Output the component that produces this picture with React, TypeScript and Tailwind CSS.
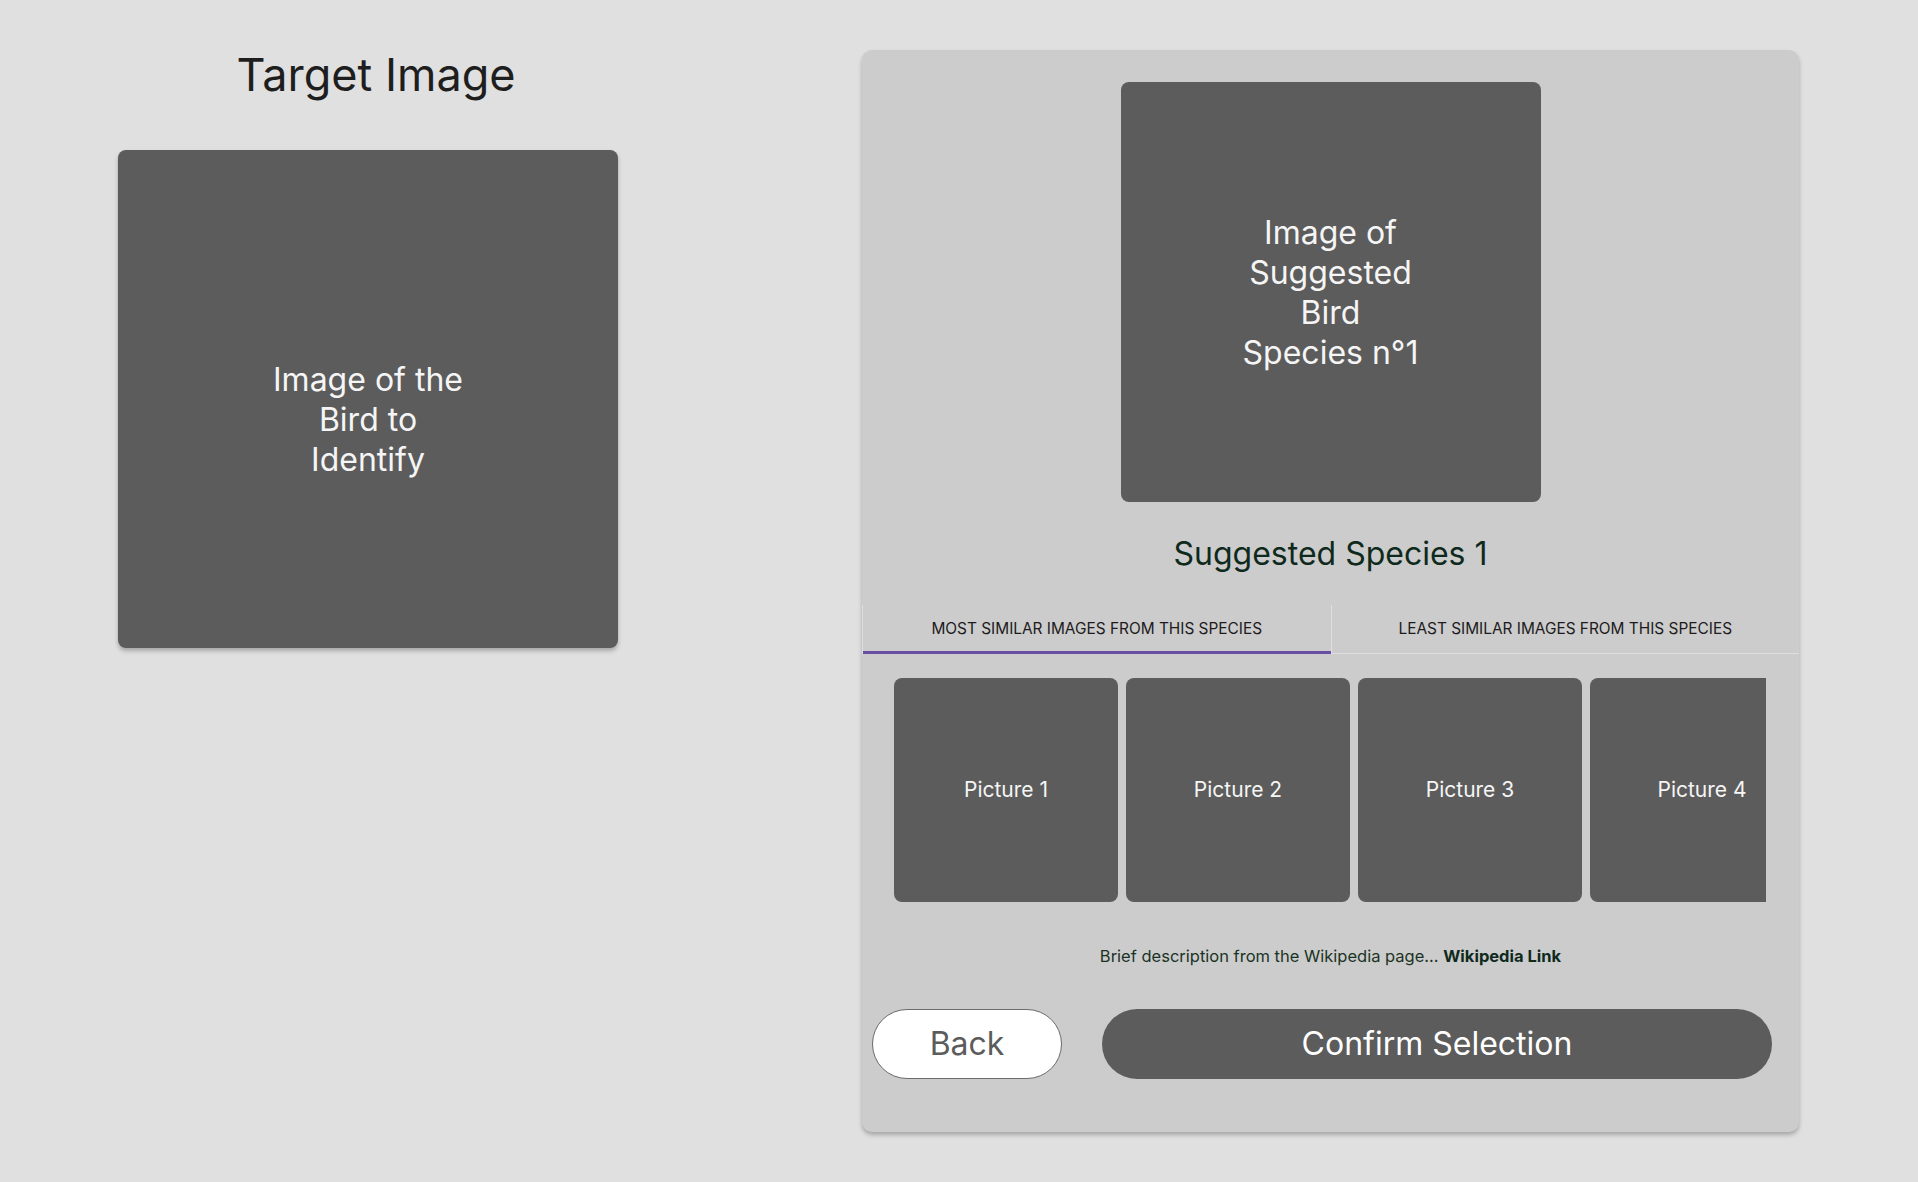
import { useState } from "react";

const pictures = ["Picture 1", "Picture 2", "Picture 3", "Picture 4"];

function App() {
  const [tab, setTab] = useState(0);

  return (
    <div className="min-h-screen bg-[#e0e0e0] font-['Inter',sans-serif]">
      <div className="flex items-start gap-[244px] pl-[118px] pt-[50px]">
        {/* Target image */}
        <div className="flex w-[500px] flex-col">
          <h1 className="-mt-[3px] pl-[16px] text-center text-[45px] leading-[56px] text-[#1e1e1e]">Target Image</h1>
          <div className="mt-[47px] flex h-[498px] w-[500px] items-center justify-center rounded-[8px] bg-[#5c5c5c] pt-[42px] shadow-[0_3px_4px_rgba(0,0,0,0.25)]">
            <p className="text-center text-[32px] leading-[40px] text-[#f5f5f5]">
              Image of the
              <br />
              Bird to
              <br />
              Identify
            </p>
          </div>
        </div>

        {/* Suggestion panel */}
        <div className="flex w-[937px] flex-col items-center rounded-[10px] bg-[#cccccc] pt-[32px] pb-[53px] shadow-[0_3px_4px_rgba(0,0,0,0.25)]">
          <div className="flex h-[420px] w-[420px] items-center justify-center rounded-[8px] bg-[#5c5c5c] pt-[2px]">
            <p className="text-center text-[32px] leading-[40px] text-[#f5f5f5]">
              Image of
              <br />
              Suggested
              <br />
              Bird
              <br />
              Species n°1
            </p>
          </div>

          <h2 className="mt-[32px] text-[32px] leading-[40px] text-[#0f2a1c]">Suggested Species 1</h2>

          <div className="mt-[31px] flex w-full border-b border-[#dedede]">
            {["Most similar images from this species", "Least similar images from this species"].map((label, i) => (
              <button
                key={label}
                onClick={() => setTab(i)}
                className={
                  "relative flex h-[48px] flex-1 items-center justify-center text-[15.4px] uppercase text-[#1d1b20] " +
                  (i === 0 ? "border-r border-l border-[#dedede]" : "")
                }
              >
                {label}
                {tab === i && <span className="absolute right-0 -bottom-px left-0 h-[3px] bg-[#6750a4]" />}
              </button>
            ))}
          </div>

          <div className="mt-[24px] ml-[32px] w-[872px] self-start overflow-hidden">
            <div className="flex gap-[8px]">
              {pictures.map((p) => (
                <div
                  key={p}
                  className="flex h-[224px] w-[224px] shrink-0 items-center justify-center rounded-[8px] bg-[#5c5c5c] text-[21px] text-[#f5f5f5]"
                >
                  {p}
                </div>
              ))}
            </div>
          </div>

          <p className="mt-[44px] text-[16.5px] leading-[20px] text-[#1b3325]">
            Brief description from the Wikipedia page... <span className="font-bold text-[#0f2a1c]">Wikipedia Link</span>
          </p>

          <div className="mt-[43px] flex w-full items-center gap-[40px] pr-[27px] pl-[10px]">
            <button className="h-[70px] w-[190px] rounded-full border border-[#6b6b6b] bg-white text-[32px] text-[#5c5c5c]">
              Back
            </button>
            <button className="h-[70px] flex-1 rounded-full bg-[#5c5c5c] text-[32px] text-white">Confirm Selection</button>
          </div>
        </div>
      </div>
    </div>
  );
}

export default App;
